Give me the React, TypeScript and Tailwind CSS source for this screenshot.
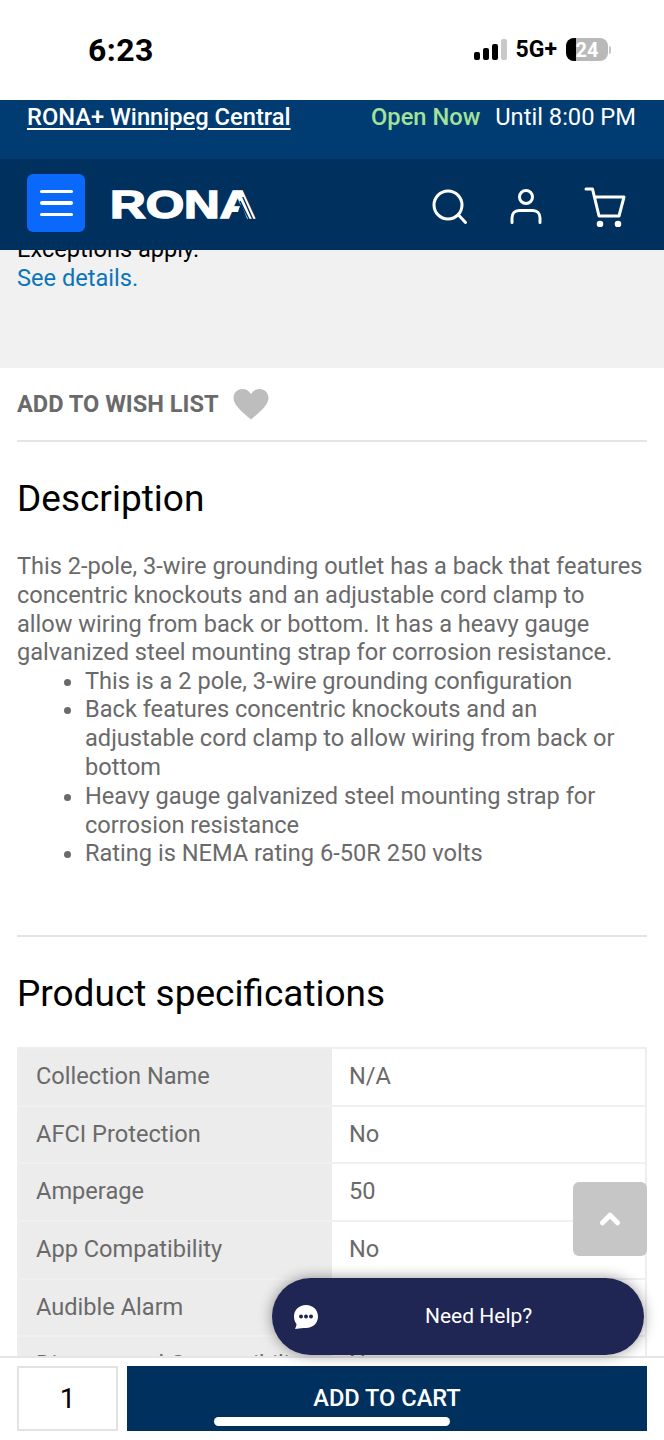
import { ChevronUp } from "lucide-react";

const specs = [
  ["Collection Name", "N/A"],
  ["AFCI Protection", "No"],
  ["Amperage", "50"],
  ["App Compatibility", "No"],
  ["Audible Alarm", "No"],
  ["Dimmer and Compatibility", "No"],
];

function StatusBar() {
  return (
    <div className="h-[100px] shrink-0 bg-white flex items-center justify-between pl-[88px] pr-[53px] pb-[1px]">
      <span className="text-[32px] font-bold text-black tracking-[0.4px]">6:23</span>
      <div className="flex items-center">
        <svg width="33" height="21" viewBox="0 0 33 21" className="mr-[9px]">
          <rect x="0" y="13" width="6" height="8" rx="2" fill="#000" />
          <rect x="9" y="9" width="6" height="12" rx="2" fill="#000" />
          <rect x="18" y="5" width="6" height="16" rx="2" fill="#000" />
          <rect x="27" y="0" width="6" height="21" rx="2" fill="#c8c8c8" />
        </svg>
        <span className="text-[23px] font-bold text-black leading-none">5G+</span>
        <div className="ml-[9px] relative w-[42px] h-[23px] rounded-[8px] bg-[#b9b9b9] overflow-hidden">
          <div className="absolute left-0 top-0 bottom-0 w-[10px] bg-black" />
          <span className="absolute inset-0 flex items-center justify-center text-[20px] font-bold text-white leading-none">24</span>
        </div>
        <div className="ml-[1px] w-[2px] h-[8px] rounded-r bg-[#c4c4c4]" />
      </div>
    </div>
  );
}

function Logo() {
  return (
    <div className="relative ml-[25px] w-[149px] h-[30px]">
      <span className="block w-max origin-left scale-x-[1.3] text-[38px] leading-[30px] font-bold text-white font-['Liberation_Sans',sans-serif] [-webkit-text-stroke:1.5px_white]">RONA</span>
      {/* stripes on the right leg of the A */}
      <svg width="38" height="32" viewBox="0 0 38 32" className="absolute right-[-1px] top-[-1px]">
        <polygon points="13,32 19,14 26,32" fill="#00305e" />
        <path d="M20.800 8 L31.500 32 M18 12 L27.800 32" stroke="#00305e" strokeWidth="1.4" />
      </svg>
    </div>
  );
}

function SearchIcon() {
  return (
    <svg width="36" height="36" viewBox="0 0 36 36" fill="none" stroke="#fff" strokeWidth="3" strokeLinecap="round">
      <circle cx="16" cy="16" r="14" />
      <path d="M26.500 26 L33.500 33.500" />
    </svg>
  );
}

function UserIcon() {
  return (
    <svg width="32" height="36" viewBox="0 0 32 36" fill="none" stroke="#fff" strokeWidth="3" strokeLinecap="round">
      <circle cx="16" cy="8" r="6.500" />
      <path d="M2 33.500 V29 C2 24.500 5 21.500 9 21.500 H23 C27 21.500 30 24.500 30 29 V33.500" />
    </svg>
  );
}

function CartIcon() {
  return (
    <svg width="42" height="40" viewBox="0 0 42 40" fill="#fff" stroke="#fff" strokeWidth="3" strokeLinecap="round" strokeLinejoin="round">
      <path d="M2 2 H8.500 L15 29 H35 L40 10 H10.500" fill="none" />
      <circle cx="16" cy="37" r="1.800" />
      <circle cx="34" cy="37" r="1.800" />
    </svg>
  );
}

function Header() {
  return (
    <div className="shrink-0">
      <div className="h-[59px] bg-[#003c71] flex justify-between pl-[27px] pr-[28px] pt-[3px] text-[23.7px] leading-[29px] text-white">
        <a className="underline font-medium underline-offset-[3px]">RONA+ Winnipeg Central</a>
        <div className="flex gap-[15px]">
          <span className="text-[#a2e29a] font-medium">Open Now</span>
          <span>Until 8:00 PM</span>
        </div>
      </div>
      <div className="h-[91px] bg-[#00305e] flex items-center pl-[27px]">
        <button className="w-[58px] h-[58px] rounded-[6px] bg-[#0a68fb] flex flex-col items-center justify-center gap-[8px] mt-[-3px]">
          <span className="w-[33px] h-[3.5px] rounded bg-white" />
          <span className="w-[33px] h-[3.5px] rounded bg-white" />
          <span className="w-[33px] h-[3.5px] rounded bg-white" />
        </button>
        <Logo />
        <div className="ml-auto flex items-center pr-[38px] gap-[42px] mt-[4px]">
          <SearchIcon />
          <UserIcon />
          <CartIcon />
        </div>
      </div>
    </div>
  );
}

function Description() {
  return (
    <div className="px-[17px]">
      <div className="h-[74px] pt-[2px] flex items-center gap-[14px] border-b-2 border-[#e4e4e4]">
        <span className="text-[23.6px] font-bold text-[#6a6a6a]">ADD TO WISH LIST</span>
        <svg width="36" height="32" viewBox="0 0 24 22" fill="#bdbdbd">
          <path d="M12 21 C5 15 0 11 0 6 C0 2.500 2.700 0 6 0 C8.500 0 10.700 1.300 12 3.500 C13.300 1.300 15.500 0 18 0 C21.300 0 24 2.500 24 6 C24 11 19 15 12 21 Z" />
        </svg>
      </div>
      <h2 className="text-[37px] leading-[43px] text-black mt-[35px]">Description</h2>
      <div className="mt-[32px] text-[23.6px] leading-[28.8px] text-[#6a6a6a]">
        <p className="pr-[3px]">This 2-pole, 3-wire grounding outlet has a back that features concentric knockouts and an adjustable cord clamp to allow wiring from back or bottom. It has a heavy gauge galvanized steel mounting strap for corrosion resistance.</p>
        <ul className="list-disc pl-[68px] mt-[-0.6px]">
          <li>This is a 2 pole, 3-wire grounding configuration</li>
          <li>Back features concentric knockouts and an adjustable cord clamp to allow wiring from back or bottom</li>
          <li>Heavy gauge galvanized steel mounting strap for corrosion resistance</li>
          <li>Rating is NEMA rating 6-50R 250 volts</li>
        </ul>
      </div>
      <div className="mt-[67px] border-t-2 border-[#e4e4e4]" />
      <h2 className="text-[37px] leading-[43px] text-black mt-[35px]">Product specifications</h2>
      <div className="mt-[32px] border-2 border-[#eee] border-b-0">
        {specs.map(([name, value]) => (
          <div key={name} className="flex h-[57.6px] border-b-2 border-[#f0f0f0] text-[23.6px] text-[#6a6a6a]">
            <div className="w-[313px] bg-[#ececec] flex items-center pl-[17px]">{name}</div>
            <div className="flex-1 bg-white flex items-center pl-[17px]">{value}</div>
          </div>
        ))}
      </div>
    </div>
  );
}

function BottomBar() {
  return (
    <div className="relative shrink-0 h-[84px] bg-white border-t-2 border-[#e6e6e6] flex gap-[9px] px-[17px] pt-[8px]">
      <div className="w-[101px] h-[65px] border-2 border-[#e2e2e2] flex items-center justify-center text-[28px] text-black">1</div>
      <button className="flex-1 h-[65px] bg-[#00305e] text-white text-[23.6px] font-medium">ADD TO CART</button>
      <div className="absolute left-[214px] bottom-[14px] w-[236px] h-[9px] rounded-full bg-white" />
    </div>
  );
}

export default function App() {
  return (
    <div className="relative w-[664px] h-[1440px] overflow-hidden flex flex-col bg-white font-['Roboto',sans-serif]">
      <StatusBar />
      <Header />
      <main className="flex-1 min-h-0 overflow-hidden">
        <div className="h-[118px] bg-[#f1f1f1] px-[17px] text-[23.6px] leading-[29px] overflow-hidden">
          <p className="text-black mt-[-15px]">Exceptions apply.</p>
          <a className="text-[#0a76b8]">See details.</a>
        </div>
        <Description />
      </main>
      <BottomBar />
      <button className="absolute left-[573px] top-[1182px] w-[74px] h-[74px] rounded-[6px] bg-[#c6c6c6] flex items-center justify-center text-white">
        <ChevronUp size={30} strokeWidth={4} />
      </button>
      <button className="absolute left-[272px] top-[1278px] w-[372px] h-[77px] rounded-full bg-[#202654] text-white flex items-center shadow-[0_0_14px_rgba(0,0,0,0.4)]">
        <svg width="26" height="26" viewBox="0 0 26 26" className="ml-[21px]">
          <path d="M13 1 C20 1 25 6 25 12.500 C25 19 20 24 13 24 C11 24 8 24 2 25 C3 23 3.500 21 3.500 20 C2 18 1 15.500 1 12.500 C1 6 6 1 13 1 Z" fill="#fff" />
          <circle cx="8" cy="12.500" r="2" fill="#202654" />
          <circle cx="13" cy="12.500" r="2" fill="#202654" />
          <circle cx="18" cy="12.500" r="2" fill="#202654" />
        </svg>
        <span className="ml-[106px] text-[21px]">Need Help?</span>
      </button>
    </div>
  );
}
